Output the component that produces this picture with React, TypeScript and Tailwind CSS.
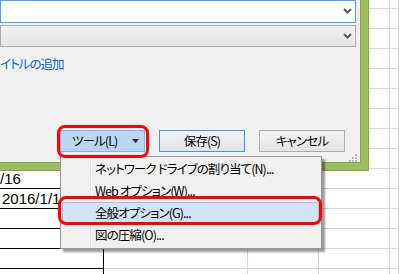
const jp = "font-['Noto_Sans_CJK_JP',sans-serif] [font-feature-settings:'palt']";

function Chevron() {
  return (
    <svg width="9" height="6" viewBox="0 0 9 6" className="text-[#5a5a5a]">
      <path d="M1 1l3.5 3.5L8 1" fill="none" stroke="currentColor" strokeWidth="2" />
    </svg>
  );
}

function Sheet() {
  const cells = [];
  for (let r = 0; r < 15; r++) {
    for (let c = 0; c < 5; c++) {
      const dark = c === 0 && r >= 9;
      let text = '';
      if (c === 0 && r === 9) text = '/16';
      if (c === 0 && r === 10) text = '2016/1/1';
      cells.push(
        <div
          key={`${r}-${c}`}
          className={`border-b border-r whitespace-nowrap pl-[2px] text-[15px] leading-[19px] text-black font-['Liberation_Sans',sans-serif] ${
            dark ? 'border-black' : 'border-[#d0d7e5]'
          } ${c === 0 && r === 9 ? '!pl-0' : ''}`}
        >
          {text}
        </div>
      );
    }
  }
  return (
    <div className="-mt-[11px] grid grid-cols-[104px_144px_71px_71px_1fr] auto-rows-[20px]">
      {cells}
    </div>
  );
}

const btn = 'h-[22px] w-[86px] border flex items-center text-[12.5px] tracking-[-0.9px] text-black';

export default function App() {
  return (
    <div className={`relative w-[399px] h-[274px] overflow-hidden bg-white ${jp}`}>
      <Sheet />

      {/* dialog window */}
      <div className="absolute left-0 top-0 w-[369px] h-[171px] bg-[#9cbd5c] border-r border-b border-[#84a64a]">
        <div className="w-[361px] h-[163px] bg-[#f0f0f0] border-r border-b border-[#8aa552] flex flex-col">
          <div className="h-[23px] w-[356px] border border-[#569de5] bg-white flex items-center justify-end pr-[3px]">
            <Chevron />
          </div>
          <div className="mt-[2px] h-[23px] w-[356px] border border-[#acacac] bg-gradient-to-b from-[#f2f2f2] to-[#e5e5e5] flex items-center justify-end pr-[3px]">
            <Chevron />
          </div>
          <div className="mt-[10px] h-[14px] text-[12.5px] leading-[14px] tracking-[-1px] text-[#0066cc]">イトルの追加</div>
          <div className="mt-[59px] flex gap-[14px] pl-[60px]">
            <div className={`${btn} !w-[85px] bg-[#b9d6f3] border-[#7eb4ea] justify-between pl-[11px] pr-[5px]`}>
              <span>ツール(L)</span>
              <svg width="7" height="4" viewBox="0 0 7 4">
                <path d="M0 0h7L3.5 4z" fill="#222" />
              </svg>
            </div>
            <div className={`${btn} justify-center border-[#3399ff] bg-gradient-to-b from-[#f2f2f2] to-[#e5e5e5]`}>保存(S)</div>
            <div className={`${btn} justify-center border-[#acacac] bg-gradient-to-b from-[#f2f2f2] to-[#e5e5e5]`}>キャンセル</div>
          </div>
          <div className="mt-[2px] flex justify-end pr-[3px]">
            <svg width="8" height="8" viewBox="0 0 8 8" fill="#b8b8b8">
              <rect x="6" y="0" width="2" height="2" />
              <rect x="3" y="3" width="2" height="2" />
              <rect x="6" y="3" width="2" height="2" />
              <rect x="0" y="6" width="2" height="2" />
              <rect x="3" y="6" width="2" height="2" />
              <rect x="6" y="6" width="2" height="2" />
            </svg>
          </div>
        </div>
      </div>

      {/* dropdown menu */}
      <div className="absolute left-[60px] top-[156px] w-[262px] h-[93px] border border-[#979797] py-px shadow-[3px_3px_2px_rgba(0,0,0,0.4)] bg-[linear-gradient(90deg,#f0f0f0_29px,#e2e3e3_29px,#e2e3e3_30px,#ffffff_30px,#ffffff_31px,#f0f0f0_31px)] text-[12.5px] tracking-[-0.9px] text-black">
        <div className="h-[22px] flex items-center pl-[34px] whitespace-nowrap">ネットワーク ドライブの割り当て(N)...</div>
        <div className="h-[22px] flex items-center pl-[34px] whitespace-nowrap">Web オプション(W)...</div>
        <div className="h-[22px] ml-px mr-[2px] flex items-center pl-[32px] whitespace-nowrap bg-[#d1e3f4] border border-[#9cc3ea] rounded-[3px]">全般オプション(G)...</div>
        <div className="h-[22px] flex items-center pl-[34px] whitespace-nowrap">図の圧縮(O)...</div>
      </div>

      {/* red annotations */}
      <div className="absolute left-[57px] top-[125px] w-[92px] h-[33px] border-[3px] border-[#ff0000] rounded-[8px]" />
      <div className="absolute left-[58px] top-[196px] w-[264px] h-[29px] border-[3px] border-[#ff0000] rounded-[8px]" />
    </div>
  );
}
